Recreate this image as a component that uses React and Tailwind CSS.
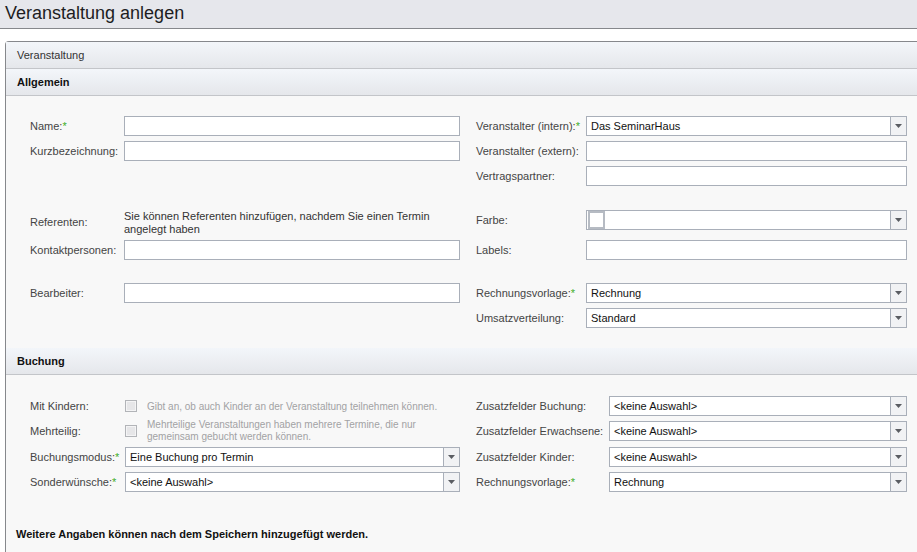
import React from "react";

const Req = () => <span className="text-[#3fae2a]">*</span>;

function Arrow() {
  return (
    <div className="w-[16px] h-full border-l border-[#a9afb9] bg-[#f1f2f4] flex items-center justify-center">
      <svg width="7" height="4" viewBox="0 0 7 4">
        <polygon points="0,0 7,0 3.5,4" fill="#5a5d62" />
      </svg>
    </div>
  );
}

function Input({ w }) {
  return <div className={`${w} h-[20px] border border-[#a9afb9] bg-white`} />;
}

function Select({ w, children }) {
  return (
    <div className={`${w} h-[20px] border border-[#a9afb9] bg-white flex items-stretch`}>
      <div className="flex-1 pl-[4px] text-[11px] leading-[18px] text-[#111] whitespace-nowrap overflow-hidden">
        {children}
      </div>
      <Arrow />
    </div>
  );
}

function Row({ label, lw, children, className = "" }) {
  return (
    <div className={`flex items-center h-[20px] ${className}`}>
      <div className={`${lw} shrink-0 text-[11px] text-[#444] whitespace-nowrap`}>{label}</div>
      {children}
    </div>
  );
}

function SectionHeader({ children, bold }) {
  return (
    <div
      className={`h-[27px] border-b border-[#c3c5c9] bg-gradient-to-b from-[#f3f6fa] to-[#e5e7eb] pl-[11px] flex items-center text-[11px] ${
        bold ? "font-bold text-[#111]" : "text-[#333]"
      }`}
    >
      {children}
    </div>
  );
}

function Checkbox() {
  return (
    <div className="w-[12px] h-[12px] border border-[#b2b4b8] bg-[#e6e6e8] shadow-[inset_0_0_0_1px_#f4f4f5] shrink-0" />
  );
}

export default function App() {
  const LL = "w-[94px]";
  const LI = "w-[336px]";
  const RL = "w-[110px]";
  const RI = "w-[321px]";
  return (
    <div className="w-[917px] h-[552px] overflow-hidden bg-white font-['Liberation_Sans',Arial,sans-serif]">
      <div className="h-[29px] bg-[#e6e7ec] border-b border-[#86888c] pl-[5px] text-[18px] leading-[27px] text-[#1d1d1f]">
        Veranstaltung anlegen
      </div>
      <div className="pt-[12px] pl-[5px]">
        <div className="w-[940px] h-[600px] border-l border-t border-[#86888c] rounded-tl-[4px] bg-[#f8f8f8]">
          <SectionHeader>Veranstaltung</SectionHeader>
          <SectionHeader bold>Allgemein</SectionHeader>

          {/* Allgemein body */}
          <div className="pl-[24px] pt-[20px] pb-[20px] flex flex-col">
            {/* group 1 */}
            <div className="flex gap-[16px]">
              <div className="flex flex-col gap-[5px]">
                <Row lw={LL} label={<>Name:<Req /></>}>
                  <Input w={LI} />
                </Row>
                <Row lw={LL} label="Kurzbezeichnung:">
                  <Input w={LI} />
                </Row>
              </div>
              <div className="flex flex-col gap-[5px]">
                <Row lw={RL} label={<>Veranstalter (intern):<Req /></>}>
                  <Select w={RI}>Das SeminarHaus</Select>
                </Row>
                <Row lw={RL} label="Veranstalter (extern):">
                  <Input w={RI} />
                </Row>
                <Row lw={RL} label="Vertragspartner:">
                  <Input w={RI} />
                </Row>
              </div>
            </div>

            {/* group 2 */}
            <div className="flex gap-[16px] mt-[24px]">
              <div className="flex flex-col gap-[5px]">
                <div className="flex items-center h-[25px]">
                  <div className={`${LL} shrink-0 text-[11px] text-[#444]`}>Referenten:</div>
                  <div className={`${LI} text-[11px] leading-[13px] text-[#333]`}>
                    Sie können Referenten hinzufügen, nachdem Sie einen Termin
                    <br />
                    angelegt haben
                  </div>
                </div>
                <Row lw={LL} label="Kontaktpersonen:">
                  <Input w={LI} />
                </Row>
              </div>
              <div className="flex flex-col gap-[10px]">
                <Row lw={RL} label="Farbe:">
                  <div className={`${RI} h-[20px] border border-[#a9afb9] bg-white flex items-stretch`}>
                    <div className="flex-1 pl-[1px]">
                      <div className="w-[17px] h-[18px] border-2 border-[#b6bbc3] bg-white" />
                    </div>
                    <Arrow />
                  </div>
                </Row>
                <Row lw={RL} label="Labels:">
                  <Input w={RI} />
                </Row>
              </div>
            </div>

            {/* group 3 */}
            <div className="flex gap-[16px] mt-[23px]">
              <div className="flex flex-col gap-[5px]">
                <Row lw={LL} label="Bearbeiter:">
                  <Input w={LI} />
                </Row>
              </div>
              <div className="flex flex-col gap-[5px]">
                <Row lw={RL} label={<>Rechnungsvorlage:<Req /></>}>
                  <Select w={RI}>Rechnung</Select>
                </Row>
                <Row lw={RL} label="Umsatzverteilung:">
                  <Select w={RI}>Standard</Select>
                </Row>
              </div>
            </div>
          </div>

          <SectionHeader bold>Buchung</SectionHeader>

          {/* Buchung body */}
          <div className="pl-[24px] pt-[21px]">
            <div className="flex gap-[16px]">
              <div className="flex flex-col">
                <Row lw="w-[95px]" label="Mit Kindern:">
                  <div className="flex items-center gap-[10px] w-[335px]">
                    <Checkbox />
                    <span className="text-[10px] text-[#a2a2a4] whitespace-nowrap">
                      Gibt an, ob auch Kinder an der Veranstaltung teilnehmen können.
                    </span>
                  </div>
                </Row>
                <Row lw="w-[95px]" label="Mehrteilig:" className="mt-[5px]">
                  <div className="flex items-center gap-[10px] w-[335px]">
                    <Checkbox />
                    <span className="text-[10px] leading-[12px] text-[#a2a2a4] whitespace-nowrap">
                      Mehrteilige Veranstaltungen haben mehrere Termine, die nur
                      <br />
                      gemeinsam gebucht werden können.
                    </span>
                  </div>
                </Row>
                <Row lw="w-[95px]" label={<>Buchungsmodus:<Req /></>} className="mt-[6px]">
                  <Select w="w-[335px]">Eine Buchung pro Termin</Select>
                </Row>
                <Row lw="w-[95px]" label={<>Sonderwünsche:<Req /></>} className="mt-[5px]">
                  <Select w="w-[335px]">&lt;keine Auswahl&gt;</Select>
                </Row>
              </div>
              <div className="flex flex-col">
                <Row lw="w-[133px]" label="Zusatzfelder Buchung:">
                  <Select w="w-[298px]">&lt;keine Auswahl&gt;</Select>
                </Row>
                <Row lw="w-[133px]" label="Zusatzfelder Erwachsene:" className="mt-[5px]">
                  <Select w="w-[298px]">&lt;keine Auswahl&gt;</Select>
                </Row>
                <Row lw="w-[133px]" label="Zusatzfelder Kinder:" className="mt-[6px]">
                  <Select w="w-[298px]">&lt;keine Auswahl&gt;</Select>
                </Row>
                <Row lw="w-[133px]" label={<>Rechnungsvorlage:<Req /></>} className="mt-[5px]">
                  <Select w="w-[298px]">Rechnung</Select>
                </Row>
              </div>
            </div>
          </div>
          <div className="mt-[36px] pl-[10px] text-[11px] leading-[13px] font-bold text-[#111]">
            Weitere Angaben können nach dem Speichern hinzugefügt werden.
          </div>
        </div>
      </div>
    </div>
  );
}
